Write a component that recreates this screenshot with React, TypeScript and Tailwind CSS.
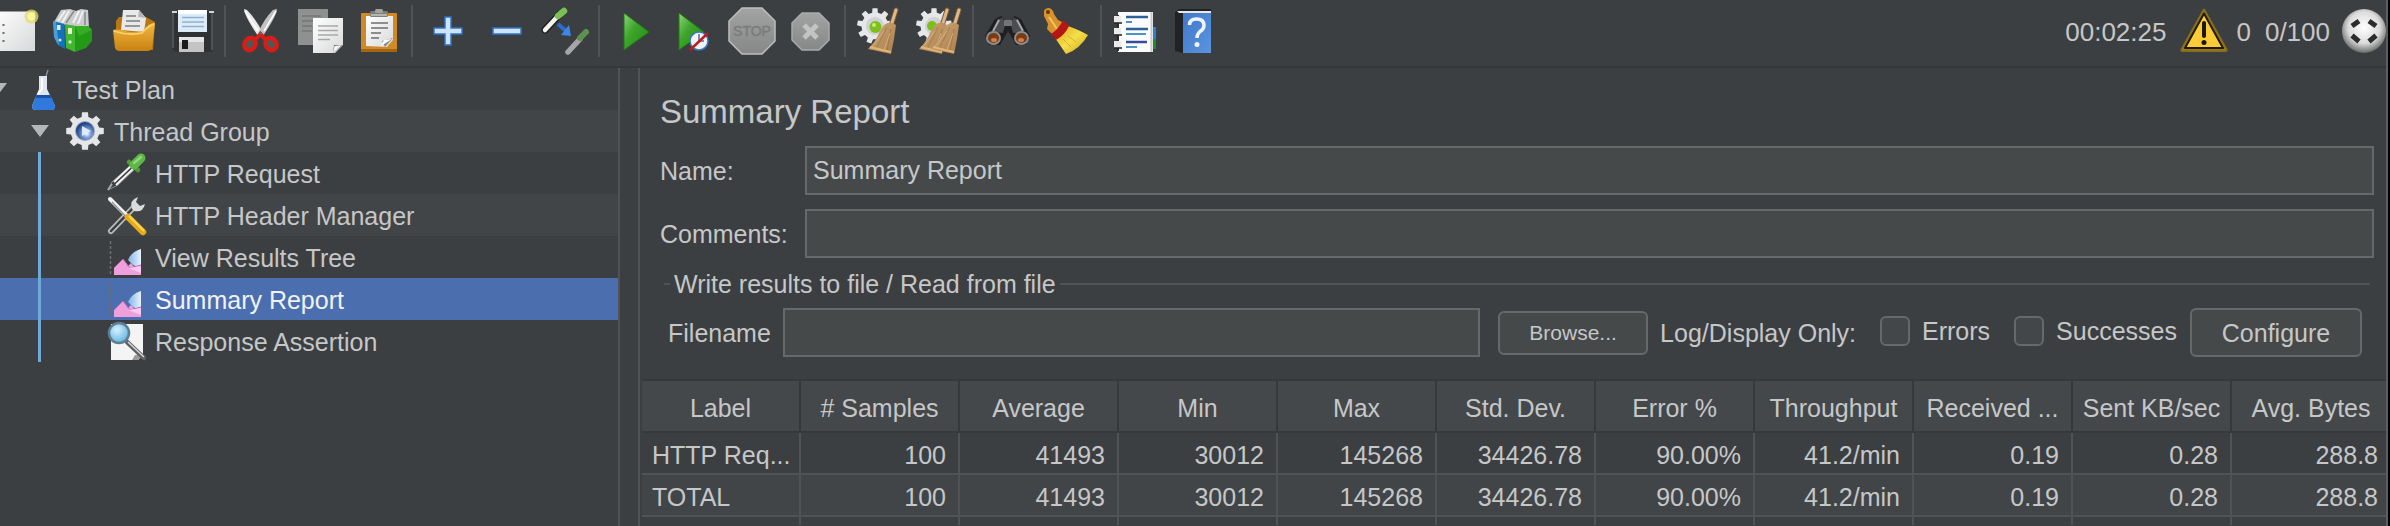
import React from "react";

type IconProps = { children: React.ReactNode; className?: string; box?: string };

function Svg({ children, className = "size-12", box = "0 0 48 48" }: IconProps) {
  return (
    <svg viewBox={box} className={`${className} shrink-0 overflow-visible`} aria-hidden="true">
      {children}
    </svg>
  );
}

function gearPath(cx: number, cy: number, outer: number, inner: number, teeth: number) {
  const step = (Math.PI * 2) / teeth;
  const points: string[] = [];
  for (let i = 0; i < teeth; i++) {
    const a = i * step - Math.PI / 2;
    const corners: [number, number][] = [
      [a - step * 0.3, inner],
      [a - step * 0.2, outer],
      [a + step * 0.2, outer],
      [a + step * 0.3, inner],
    ];
    for (const [t, r] of corners) {
      points.push(`${(cx + r * Math.cos(t)).toFixed(2)} ${(cy + r * Math.sin(t)).toFixed(2)}`);
    }
  }
  return `M${points.join("L")}Z`;
}

function Gradients() {
  return (
    <svg className="absolute size-0" aria-hidden="true">
      <defs>
        <linearGradient id="paper" x1="0" y1="0" x2="1" y2="1">
          <stop offset="0" stopColor="#ffffff" />
          <stop offset="1" stopColor="#d8d9da" />
        </linearGradient>
        <linearGradient id="orange" x1="0" y1="0" x2="0" y2="1">
          <stop offset="0" stopColor="#f3b742" />
          <stop offset="1" stopColor="#c9820f" />
        </linearGradient>
        <linearGradient id="green" x1="0" y1="0" x2="1" y2="1">
          <stop offset="0" stopColor="#8fd47d" />
          <stop offset="0.4" stopColor="#3fa52c" />
          <stop offset="1" stopColor="#1f8a10" />
        </linearGradient>
        <linearGradient id="stop" x1="0" y1="0" x2="0" y2="1">
          <stop offset="0" stopColor="#a2a3a3" />
          <stop offset="1" stopColor="#868787" />
        </linearGradient>
        <linearGradient id="straw" x1="0" y1="0" x2="1" y2="1">
          <stop offset="0" stopColor="#cda677" />
          <stop offset="1" stopColor="#ab7f4b" />
        </linearGradient>
        <linearGradient id="yellow" x1="0" y1="0" x2="1" y2="1">
          <stop offset="0" stopColor="#d9a91c" />
          <stop offset="0.5" stopColor="#f6df4a" />
          <stop offset="1" stopColor="#caa31d" />
        </linearGradient>
        <linearGradient id="book" x1="0" y1="0" x2="1" y2="1">
          <stop offset="0" stopColor="#3f78c8" />
          <stop offset="1" stopColor="#5b95e0" />
        </linearGradient>
        <linearGradient id="sky" x1="0" y1="0" x2="1" y2="0">
          <stop offset="0" stopColor="#7fb2e6" />
          <stop offset="1" stopColor="#e9f3ff" />
        </linearGradient>
        <radialGradient id="sphere" cx="0.5" cy="0.42" r="0.6">
          <stop offset="0" stopColor="#ffffff" />
          <stop offset="0.6" stopColor="#dcdcdc" />
          <stop offset="1" stopColor="#5e5f5f" />
        </radialGradient>
        <radialGradient id="lens" cx="0.4" cy="0.35" r="0.7">
          <stop offset="0" stopColor="#d4f2ff" />
          <stop offset="1" stopColor="#5fb0dd" />
        </radialGradient>
        <radialGradient id="hub" cx="0.6" cy="0.65" r="0.6">
          <stop offset="0" stopColor="#ffffff" />
          <stop offset="0.35" stopColor="#7ea6e0" />
          <stop offset="1" stopColor="#1f3f86" />
        </radialGradient>
      </defs>
    </svg>
  );
}

const NewIcon = () => (
  <Svg>
    <rect x="1" y="4.500" width="44" height="39.500" fill="url(#paper)" />
    <path d="M13.500 17v2M13.500 25v2M13.500 33v2" stroke="#6b6b6b" strokeWidth="2" />
    <circle cx="41.500" cy="9.500" r="7" fill="#e3dc6a" opacity="0.75" />
    <circle cx="41.500" cy="9.500" r="4" fill="#fbf5a0" />
  </Svg>
);

const TemplatesIcon = () => (
  <Svg>
    <path d="M5 15 12 3 21 2 27 4 32 2 39 3 40 21 26 19 15 18Z" fill="#c9cbcc" />
    <path d="M9 14 16 4M13 16 20 4M24 16 30 4M29 17 34 4" stroke="#f1f1f1" strokeWidth="2" />
    <path d="M17 16 25 4M36 18V5" stroke="#85888a" strokeWidth="1.500" />
    <path d="M4 14 15.500 17 16 42 9 38 5 30Z" fill="#1672b8" />
    <path d="M4 14 7 15 10 38 8 36 5 30Z" fill="#4b9fd8" />
    <path d="M16 17 26 19 26 45 17 41Z" fill="#41b62f" />
    <path d="M26 19 39 19 43 23V34L37 41 26 45Z" fill="#229a15" />
    <path d="M26 19 39 19 43 23 30 29Z" fill="#35ad25" />
    <rect x="19" y="21" width="4" height="6" fill="#e9f9c8" />
    <rect x="8" y="18" width="3.500" height="5" fill="#d9efff" />
    <circle cx="21" cy="35" r="1.700" fill="#d4f0cf" />
    <circle cx="11" cy="33" r="1.500" fill="#d4e8f7" />
  </Svg>
);

const OpenIcon = () => (
  <Svg>
    <path d="M8 14 11 10H38L47 15 45 43 8 40Z" fill="#b97712" />
    <path d="M15 3H31L38 11 36 25 13 23Z" fill="#e9e9e9" />
    <path d="M31 3 30 10 38 11Z" fill="#b5b5b5" />
    <path d="M18 9h10M18 14h14M17 19h15" stroke="#7c7c7c" strokeWidth="1.500" />
    <path d="M5 23Q6 22 14 23 25 27 35 24 40 16 47 16L44 41Q43 44 39 44H12Q8 44 7 41Z" fill="url(#orange)" />
    <path d="M6 24Q20 29 34 26 40 19 46 17" stroke="#f9d272" strokeWidth="1.500" fill="none" />
  </Svg>
);

const SaveIcon = () => (
  <Svg>
    <path d="M5 4H46V44L43 45H9L5 42Z" fill="#2f3133" />
    <path d="M6 4V41M45 4V43" stroke="#5a5d60" strokeWidth="1.500" />
    <rect x="5" y="4" width="5" height="2" fill="#d5d5d5" />
    <rect x="42" y="4" width="5" height="2" fill="#d5d5d5" />
    <rect x="11" y="3" width="29" height="22" fill="#dcebf7" />
    <rect x="11" y="3" width="29" height="4" fill="#ffffff" />
    <path d="M15 10.500h22M15 15h22M15 19.500h22" stroke="#8fb3d1" strokeWidth="1.500" />
    <path d="M12 30H37V45H12Z" fill="#c4c4c4" />
    <path d="M12 30H37V35H12Z" fill="#e6e6e6" />
    <rect x="15" y="33" width="6" height="9" fill="#1c1c1c" />
  </Svg>
);

const CutIcon = () => (
  <Svg>
    <path d="M8 2Q8 8 22 29L27 26Q20 12 11 3Z" fill="#e8e8e8" />
    <path d="M41 2Q41 8 27 29L22 26Q28 12 37 3Z" fill="#c2c2c2" />
    <path d="M9 4 22 24M40 4 28 24" stroke="#ffffff" strokeWidth="1.500" />
    <ellipse cx="14" cy="37" rx="5.500" ry="6.500" transform="rotate(35 14 37)" fill="#555" stroke="#dd1b14" strokeWidth="4" />
    <ellipse cx="35" cy="37" rx="5.500" ry="6.500" transform="rotate(-35 35 37)" fill="#555" stroke="#dd1b14" strokeWidth="4" />
    <path d="M19 33 24.500 27 30 33" stroke="#dd1b14" strokeWidth="4" fill="none" />
    <circle cx="24.500" cy="26" r="1.500" fill="#666" />
  </Svg>
);

const CopyIcon = () => (
  <Svg>
    <path d="M3 2H33V38H3Z" fill="#8f9090" />
    <path d="M7 9h19M7 14h12M7 19h10M7 24h10" stroke="#757676" strokeWidth="1.500" />
    <path d="M18 11H48V38L40 46H18Z" fill="url(#paper)" />
    <path d="M48 38 38 46 39 38Z" fill="#6c6c6c" />
    <path d="M38 46 39.500 39 47 38Z" fill="#f5f5f5" />
    <path d="M23 19h20M23 23.500h20M23 28h20M23 32.500h12" stroke="#a9a9a9" strokeWidth="1.500" />
  </Svg>
);

const PasteIcon = () => (
  <Svg>
    <rect x="7" y="6" width="36" height="39" rx="1" fill="#cf8a25" />
    <rect x="7" y="42" width="36" height="3" fill="#a56612" />
    <path d="M12 9H39V33L33 40 12 39Z" fill="url(#paper)" />
    <path d="M39 31 28 34 31 40Z" fill="#8a8a8a" />
    <path d="M38 32 30 33 27 39Z" fill="#ffffff" />
    <path d="M17 16h17M17 21h17M17 26h10M17 31h8" stroke="#6d6d6d" strokeWidth="1.500" />
    <rect x="16" y="4" width="18" height="6" rx="1.500" fill="#7d7f78" />
    <rect x="21" y="2" width="8" height="4" rx="1.500" fill="#a3a59c" />
    <path d="M17 8h16" stroke="#c7c8c0" strokeWidth="1.500" />
  </Svg>
);

const PlusIcon = () => (
  <Svg>
    <path d="M22 10h6v11h11v6H28v11h-6V27H11v-6h11Z" fill="#cfe4fb" stroke="#2f74c9" strokeWidth="1.500" />
  </Svg>
);

const MinusIcon = () => (
  <Svg>
    <rect x="11" y="21" width="28" height="6" fill="#cfe4fb" stroke="#2f74c9" strokeWidth="1.500" />
  </Svg>
);

const ToggleIcon = () => (
  <Svg>
    <path d="M4 23 18 8" stroke="#1c1c1c" strokeWidth="7" strokeLinecap="round" />
    <path d="M4 23 17 9" stroke="#f5f5f0" strokeWidth="4.500" strokeLinecap="round" />
    <path d="M17 9 23 4" stroke="#7bbf55" strokeWidth="6.500" strokeLinecap="round" />
    <path d="M27 45 39 32" stroke="#a5a5a5" strokeWidth="5.500" strokeLinecap="round" />
    <path d="M39 31 45 25" stroke="#5d9150" strokeWidth="6" strokeLinecap="round" />
    <path d="M17 17 25 24" stroke="#2b6cd0" strokeWidth="4" />
    <path d="M30 29 20 28 28 18Z" fill="#3f86ea" />
  </Svg>
);

const StartIcon = () => (
  <Svg>
    <path d="M14 6 39 25 14 43Z" fill="url(#green)" stroke="#1c7a10" strokeWidth="1" />
  </Svg>
);

const StartNoPauseIcon = () => (
  <Svg>
    <path d="M10 6 35 25 10 43Z" fill="url(#green)" stroke="#1c7a10" strokeWidth="1" />
    <circle cx="30" cy="34" r="9" fill="#f0f3f8" stroke="#3c77b8" strokeWidth="1.500" />
    <path d="M30 34V27M30 34H35" stroke="#49709c" strokeWidth="1.500" />
    <path d="M21 43 39 26" stroke="#c11b1b" strokeWidth="2.500" />
  </Svg>
);

const StopIcon = () => (
  <Svg>
    <path d="M14 1H34L47 14V34L34 47H14L1 34V14Z" fill="url(#stop)" stroke="#bdbebe" strokeWidth="1.500" />
    <text x="24" y="29" textAnchor="middle" fontSize="14" fill="#7b7c7c" stroke="#7b7c7c" strokeWidth="0.500" fontFamily="Liberation Sans, sans-serif">
      STOP
    </text>
  </Svg>
);

const ShutdownIcon = () => (
  <Svg>
    <path d="M15 6H32L42 16V33L32 43H15L5 33V16Z" fill="url(#stop)" stroke="#a9aaaa" strokeWidth="1.500" />
    <path d="M17 18 30 31M30 18 17 31" stroke="#c2c3c3" strokeWidth="5" />
  </Svg>
);

function Broom({ dx = 0 }: { dx?: number }) {
  return (
    <g transform={`translate(${dx} 0)`}>
      <path d="M40 3 35 19" stroke="#7a5630" strokeWidth="5" strokeLinecap="round" />
      <path d="M40 3 35 19" stroke="#dcb98c" strokeWidth="3" strokeLinecap="round" />
      <path d="M28 18Q34 13 40 18L38 32 35 47 26 45 12 42Q20 34 23 26Z" fill="url(#straw)" />
      <path d="M31 20 20 42M35 22 31 44" stroke="#96703f" strokeWidth="1" opacity="0.6" />
      <path d="M28 24 16 40M34 26 28 43" stroke="#dfbd90" strokeWidth="1" opacity="0.7" />
      <path d="M14 40 26 43 35 45" stroke="#e0b777" strokeWidth="2" fill="none" />
    </g>
  );
}

const ClearIcon = () => (
  <Svg>
    <path d={gearPath(19, 19, 18, 13.5, 9)} fill="#e6e7e8" />
    <circle cx="19" cy="19" r="9" fill="#cfd1d2" />
    <circle cx="19.500" cy="20" r="6" fill="#7fbf1c" />
    <circle cx="18" cy="18" r="2" fill="#c5ec7c" />
    <Broom />
  </Svg>
);

const ClearAllIcon = () => (
  <Svg>
    <path d={gearPath(19, 19, 18, 13.5, 9)} fill="#e6e7e8" />
    <circle cx="19" cy="19" r="9" fill="#cfd1d2" />
    <circle cx="17" cy="19" r="5" fill="#7fbf1c" />
    <Broom dx={-8} />
    <Broom dx={4} />
  </Svg>
);

const SearchIcon = () => (
  <Svg>
    <path d="M11 12 17 9 21 13H27L31 9 37 12 46 29 42 38 32 38 27 29 24 24 21 29 16 38 5 38 1 29Z" fill="#1f1f20" />
    <path d="M14 12 19 11 21 18 19 26 8 25ZM34 12 29 11 27 18 29 26 40 25Z" fill="#4c4d50" />
    <path d="M15 13 9 24M33 13 39 24" stroke="#a7a8ab" strokeWidth="2" />
    <rect x="20" y="13" width="8" height="6" fill="#737477" />
    <ellipse cx="9.500" cy="31" rx="7.500" ry="7" fill="#8c8d90" />
    <ellipse cx="37.500" cy="31" rx="7.500" ry="7" fill="#8c8d90" />
    <ellipse cx="9.500" cy="31" rx="5.500" ry="5" fill="#7a3c14" />
    <ellipse cx="37.500" cy="31" rx="5.500" ry="5" fill="#7a3c14" />
    <ellipse cx="10" cy="33" rx="3" ry="2" fill="#d97c3f" />
    <ellipse cx="37" cy="33" rx="3" ry="2" fill="#d97c3f" />
  </Svg>
);

const ResetIcon = () => (
  <Svg>
    <path d="M1 4Q2 1 6 1 10 2 11 7L15 13 19 15 21 20 9 27 4 22 5 17 1 9Z" fill="#d8922a" />
    <circle cx="5" cy="5" r="2" fill="#5a3a10" />
    <path d="M6 10 14 22" stroke="#f3c566" strokeWidth="2" />
    <path d="M25 19Q34 22 45 28 37 42 23 47 17 38 12 31 20 27 25 19Z" fill="url(#yellow)" />
    <path d="M20 13 26 19Q22 28 13 33L8 27Q16 22 20 13Z" fill="#b51616" />
    <path d="M20 32 28 40M25 29 33 35" stroke="#c9a024" strokeWidth="1" opacity="0.7" />
  </Svg>
);

const FunctionIcon = () => (
  <Svg>
    <rect x="39" y="20" width="5" height="12" fill="#2f7fd0" />
    <rect x="39" y="32" width="5" height="10" fill="#1d8c2c" />
    <rect x="6" y="5" width="35" height="40" fill="#fbfbfb" />
    <path d="M39.500 5V45" stroke="#c9c9c9" strokeWidth="2" />
    <path d="M14 10h22M14 22h22" stroke="#2e5f98" strokeWidth="2.500" />
    <path d="M14 15h6M14 27h20M14 40h11" stroke="#4f92c6" strokeWidth="2" />
    <path d="M14 35h21" stroke="#3a4a9c" strokeWidth="2.500" />
    <path d="M6 8V44" stroke="#2b2b2b" strokeWidth="2" />
    <path d="M2 9h7v7H2ZM2 21h7v7H2ZM2 34h7v7H2Z" fill="#e9e9e9" />
    <path d="M2 16h8M2 28h8M2 41h8" stroke="#222" strokeWidth="1.500" />
  </Svg>
);

const HelpIcon = () => (
  <Svg>
    <path d="M4 5 8 2H40V6H12V46L4 44Z" fill="#202224" />
    <path d="M6 4H40V6H8Z" fill="#e8e8e8" />
    <rect x="12" y="6" width="28" height="40" fill="url(#book)" />
    <path d="M18.500 18Q18.500 12 25.500 12 33 12 33 18.500 33 22 29 24.500 26 27 26 31" fill="none" stroke="#eef5ff" strokeWidth="3.500" />
    <circle cx="26" cy="37.500" r="2.500" fill="#eef5ff" />
  </Svg>
);

const WarningIcon = () => (
  <Svg>
    <path d="M24 2.500 46.500 42.500Q47 44 45 44H3Q1 44 1.500 42.500Z" fill="#9b7d1c" stroke="#8a6f1a" strokeWidth="2" strokeLinejoin="round" />
    <path d="M24 6.500 43 41H5Z" fill="#fbcb38" stroke="#201a05" strokeWidth="2" strokeLinejoin="round" />
    <path d="M24 16V29" stroke="#1d1805" strokeWidth="4" strokeLinecap="round" />
    <circle cx="24" cy="35.500" r="2.500" fill="#1d1805" />
  </Svg>
);

const StatusIcon = () => (
  <Svg className="size-11" box="0 0 44 44">
    <circle cx="22" cy="22" r="22" fill="url(#sphere)" />
    <g stroke="#2c2c2c" strokeWidth="5">
      <path d="M10 17 17 12M27 12 34 17M10 26.500 17 32.500M27 32.500 34 26.500" />
    </g>
  </Svg>
);

function TreeSvg({ children }: { children: React.ReactNode }) {
  return (
    <Svg className="size-10" box="0 0 40 40">
      {children}
    </Svg>
  );
}

const FlaskIcon = () => (
  <TreeSvg>
    <path d="M24 1 22 7" stroke="#8b8d8f" strokeWidth="1.500" />
    <path d="M15 7H23V20L31 37Q31 41 27 41H12Q8 41 8 37L15 20Z" fill="#dfe6ee" />
    <path d="M12.500 26H26.500L31 37Q32 41 27 41H12Q8 41 8 37Z" fill="#2f78dc" />
    <path d="M12.500 26H26.500L27.500 29H11.500Z" fill="#1c4fa6" />
    <path d="M18 9V20L14 25" stroke="#ffffff" strokeWidth="2" fill="none" />
  </TreeSvg>
);

const ThreadGroupIcon = () => (
  <TreeSvg>
    <path d={gearPath(19, 20, 19, 14.5, 8)} fill="#e4e6e8" />
    <circle cx="19" cy="20" r="10" fill="#9aa3b2" />
    <circle cx="19" cy="20" r="9" fill="url(#hub)" />
    <path d="M16 15 25 20 16 25Z" fill="#dfeafa" />
  </TreeSvg>
);

const DropperIcon = () => (
  <TreeSvg>
    <path d="M1 37 5 29 24 12 28 16 11 32Z" fill="#3a3c3d" stroke="#8f9192" strokeWidth="1" />
    <path d="M7 29 24 13M9 32 26 16" stroke="#f2f2f2" strokeWidth="2" />
    <path d="M1 37 5 31" stroke="#a5a5a5" strokeWidth="2" />
    <path d="M22 9 31 17" stroke="#4f9a35" strokeWidth="4.500" strokeLinecap="round" />
    <path d="M27 12 34 5" stroke="#5fb648" strokeWidth="9" strokeLinecap="round" />
    <path d="M27 10 34 4" stroke="#94d57c" strokeWidth="2.500" strokeLinecap="round" />
  </TreeSvg>
);

const ToolsIcon = () => (
  <TreeSvg>
    <path d="M4 36 28 11" stroke="#b8babb" strokeWidth="6" strokeLinecap="round" />
    <path d="M4 36 26 13" stroke="#3a3c3d" strokeWidth="2.500" strokeLinecap="round" />
    <path d="M25 14Q22 5 31 2L29 7 33 11 38 9Q36 18 27 16Z" fill="#dadbdc" />
    <path d="M3 4 23 24" stroke="#f1f1f1" strokeWidth="4" strokeLinecap="round" />
    <path d="M5 7 22 25" stroke="#8d8f90" strokeWidth="1.200" />
    <path d="M21 22 36 37" stroke="#e9ab17" strokeWidth="6.500" strokeLinecap="round" />
    <path d="M22 21 37 36" stroke="#fbd75b" strokeWidth="2" />
  </TreeSvg>
);

const ChartIcon = () => (
  <TreeSvg>
    <path d="M3.500 4V38" stroke="#6c6e70" strokeWidth="1.500" strokeDasharray="3 2" />
    <path d="M21 23Q24 15 34 12V32L26 28Z" fill="url(#sky)" />
    <path d="M7 38V31L16 22 21 29 24 26 28 31 34 28V38Z" fill="#ee9fdc" />
    <path d="M7 31 16 22 23 31 34 28" stroke="#b96bb0" strokeWidth="1" fill="none" />
    <path d="M21 31 34 29V36Z" fill="#f8c9ee" />
  </TreeSvg>
);

const AssertionIcon = () => (
  <TreeSvg>
    <path d="M4 3H36V34L31 39H4Z" fill="#f4f4f4" />
    <path d="M25 39 28 34 36 33 31 39Z" fill="#9b9b9b" />
    <path d="M20 21 37 37" stroke="#5e6062" strokeWidth="4.500" strokeLinecap="round" />
    <path d="M21 21 37 36" stroke="#d9dadb" strokeWidth="1.500" />
    <circle cx="12" cy="12" r="10" fill="url(#lens)" stroke="#5d7f96" strokeWidth="2.500" />
  </TreeSvg>
);

const toolGroups: { label: string; Icon: () => React.ReactElement }[][] = [
  [
    { label: "New", Icon: NewIcon },
    { label: "Templates", Icon: TemplatesIcon },
    { label: "Open", Icon: OpenIcon },
    { label: "Save", Icon: SaveIcon },
  ],
  [
    { label: "Cut", Icon: CutIcon },
    { label: "Copy", Icon: CopyIcon },
    { label: "Paste", Icon: PasteIcon },
  ],
  [
    { label: "Expand all", Icon: PlusIcon },
    { label: "Collapse all", Icon: MinusIcon },
    { label: "Toggle", Icon: ToggleIcon },
  ],
  [
    { label: "Start", Icon: StartIcon },
    { label: "Start no pauses", Icon: StartNoPauseIcon },
    { label: "Stop", Icon: StopIcon },
    { label: "Shutdown", Icon: ShutdownIcon },
  ],
  [
    { label: "Clear", Icon: ClearIcon },
    { label: "Clear all", Icon: ClearAllIcon },
  ],
  [
    { label: "Search", Icon: SearchIcon },
    { label: "Reset search", Icon: ResetIcon },
  ],
  [
    { label: "Function helper", Icon: FunctionIcon },
    { label: "Help", Icon: HelpIcon },
  ],
];

function Toolbar() {
  return (
    <header className="flex h-[68px] items-center border-b-2 border-[#343739] pb-1">
      <div className="-ml-4 flex items-center" role="toolbar" aria-label="Main toolbar">
        {toolGroups.map((group, i) => (
          <React.Fragment key={i}>
            {i > 0 && (
              <div className="flex w-2.5 justify-center">
                <div className="h-[52px] w-0.5 bg-[#505355]" />
              </div>
            )}
            {group.map(({ label, Icon }) => (
              <button key={label} type="button" aria-label={label} className="flex w-[59px] justify-center">
                <Icon />
              </button>
            ))}
          </React.Fragment>
        ))}
      </div>
      <div className="ml-auto flex items-center text-[26px] leading-8 text-[#c6c7c8]">
        <span className="pt-0.5">00:02:25</span>
        <button type="button" aria-label="Show log" className="ml-3.5 mr-2">
          <WarningIcon />
        </button>
        <span className="pt-0.5">0</span>
        <span className="ml-3.5 mr-3 pt-0.5">0/100</span>
        <StatusIcon />
      </div>
    </header>
  );
}

function Arrow() {
  return (
    <svg viewBox="0 0 18 12" className="h-3 w-[18px] shrink-0" aria-hidden="true">
      <path d="M0 0H18L9 12Z" fill="#b4b6b7" />
    </svg>
  );
}

const leaves: { name: string; Icon: () => React.ReactElement; row: string }[] = [
  { name: "HTTP Request", Icon: DropperIcon, row: "" },
  { name: "HTTP Header Manager", Icon: ToolsIcon, row: "bg-[#414547]" },
  { name: "View Results Tree", Icon: ChartIcon, row: "" },
  { name: "Summary Report", Icon: ChartIcon, row: "bg-[#4b6eaf] text-[#f0f2f5]" },
  { name: "Response Assertion", Icon: AssertionIcon, row: "" },
];

function Tree() {
  return (
    <nav className="w-[620px] shrink-0 overflow-hidden border-r-2 border-[#505355]" aria-label="Test plan">
      <ul role="tree">
        <li role="treeitem" aria-expanded="true">
          <div className="-ml-[11px] flex h-[42px] items-center">
            <Arrow />
            <span className="ml-[17px] mr-2 flex">
              <FlaskIcon />
            </span>
            <span className="pt-0.5">Test Plan</span>
          </div>
          <ul role="group">
            <li role="treeitem" aria-expanded="true">
              <div className="flex h-[42px] items-center bg-[#414547] pl-[31px]">
                <Arrow />
                <span className="ml-[17px] mr-2 flex">
                  <ThreadGroupIcon />
                </span>
                <span className="pt-0.5">Thread Group</span>
              </div>
              <ul role="group">
                {leaves.map(({ name, Icon, row }) => (
                  <li
                    key={name}
                    role="treeitem"
                    aria-selected={name === "Summary Report"}
                    className={`flex h-[42px] items-center pl-[38px] ${row}`}
                  >
                    <span className="w-[3px] self-stretch bg-[#6fa9d6]" />
                    <span className="ml-[66px] mr-2 flex">
                      <Icon />
                    </span>
                    <span className="pt-0.5">{name}</span>
                  </li>
                ))}
              </ul>
            </li>
          </ul>
        </li>
      </ul>
    </nav>
  );
}

const headers = [
  "Label",
  "# Samples",
  "Average",
  "Min",
  "Max",
  "Std. Dev.",
  "Error %",
  "Throughput",
  "Received ...",
  "Sent KB/sec",
  "Avg. Bytes",
];

const results = [
  ["HTTP Req...", "100", "41493", "30012", "145268", "34426.78", "90.00%", "41.2/min", "0.19", "0.28", "288.8"],
  ["TOTAL", "100", "41493", "30012", "145268", "34426.78", "90.00%", "41.2/min", "0.19", "0.28", "288.8"],
];

function ResultsTable() {
  return (
    <div className="overflow-hidden pl-0.5">
      <table className="w-[calc(100%+6px)] table-fixed border-separate border-spacing-0">
        <thead>
          <tr className="bg-[#45484a]">
            {headers.map((h, i) => (
              <th
                key={h}
                scope="col"
                className={`h-[54px] border-b-2 border-r-2 border-t-2 border-[#36393b] p-0 pt-1 text-center font-normal whitespace-nowrap ${
                  i < headers.length - 1 ? "w-[159px]" : ""
                }`}
              >
                {h}
              </th>
            ))}
          </tr>
        </thead>
        <tbody>
          {results.map((row, r) => (
            <tr key={row[0]} className={r % 2 ? "bg-[#414547]" : ""}>
              {row.map((value, i) => (
                <td
                  key={i}
                  className={`h-[42px] border-b-2 border-r-2 border-[#505355] pb-0 pt-1 whitespace-nowrap ${
                    i === 0 ? "pl-2.5 text-left" : "pr-3 text-right"
                  }`}
                >
                  {value}
                </td>
              ))}
            </tr>
          ))}
          <tr aria-hidden="true">
            {headers.map((h) => (
              <td key={h} className="h-2 border-r-2 border-[#505355] p-0" />
            ))}
          </tr>
        </tbody>
      </table>
    </div>
  );
}

const field = "h-[49px] min-w-0 flex-1 border-2 border-[#65696a] bg-[#45494a] px-1.5 outline-none";
const button = "rounded-md border-2 border-[#65696a] bg-[#45494a] text-center";
const tick = "size-[30px] appearance-none rounded-md border-2 border-[#65696a] bg-[#43474a]";

function SummaryReport() {
  return (
    <main className="min-w-0 flex-1 border-l-2 border-[#505355]">
      <h1 className="px-5 pt-6 text-[33px] leading-10">Summary Report</h1>
      <div className="mt-3.5 flex items-center pl-5 pr-3">
        <label htmlFor="name" className="w-[145px]">
          Name:
        </label>
        <input id="name" type="text" defaultValue="Summary Report" className={field} />
      </div>
      <div className="mt-3.5 flex items-center pl-5 pr-3">
        <label htmlFor="comments" className="w-[145px]">
          Comments:
        </label>
        <input id="comments" type="text" className={field} />
      </div>
      <section aria-labelledby="file-group" className="mt-2.5">
        <div className="flex items-center gap-1 pl-6 pr-4">
          <span className="h-0.5 w-1.5 bg-[#505355]" />
          <h2 id="file-group" className="leading-8">
            Write results to file / Read from file
          </h2>
          <span className="h-0.5 flex-1 bg-[#505355]" />
        </div>
        <div className="mt-2 flex items-center pb-[22px] pl-7 pr-6">
          <label htmlFor="filename" className="w-[115px]">
            Filename
          </label>
          <input id="filename" type="text" className={field} />
          <button type="button" className={`ml-[18px] h-11 w-[150px] text-[21px] ${button}`}>
            Browse...
          </button>
          <span className="ml-3">Log/Display Only:</span>
          <label className="ml-6 flex items-center gap-3 pb-1">
            <input type="checkbox" className={tick} />
            Errors
          </label>
          <label className="ml-6 flex items-center gap-3 pb-1">
            <input type="checkbox" className={tick} />
            Successes
          </label>
          <button type="button" className={`ml-[13px] h-[49px] w-[172px] ${button}`}>
            Configure
          </button>
        </div>
      </section>
      <ResultsTable />
    </main>
  );
}

export default function App() {
  return (
    <div className="flex min-h-screen overflow-hidden bg-black pr-0.5 font-['Liberation_Sans',Arial,sans-serif] text-[25px] leading-8 text-[#c6c7c8]">
      <Gradients />
      <div className="flex min-w-0 flex-1 flex-col border-r-2 border-[#5c5f61] bg-[#3c3f41]">
        <Toolbar />
        <div className="flex flex-1">
          <Tree />
          <div className="w-[18px] shrink-0" />
          <SummaryReport />
        </div>
      </div>
    </div>
  );
}
